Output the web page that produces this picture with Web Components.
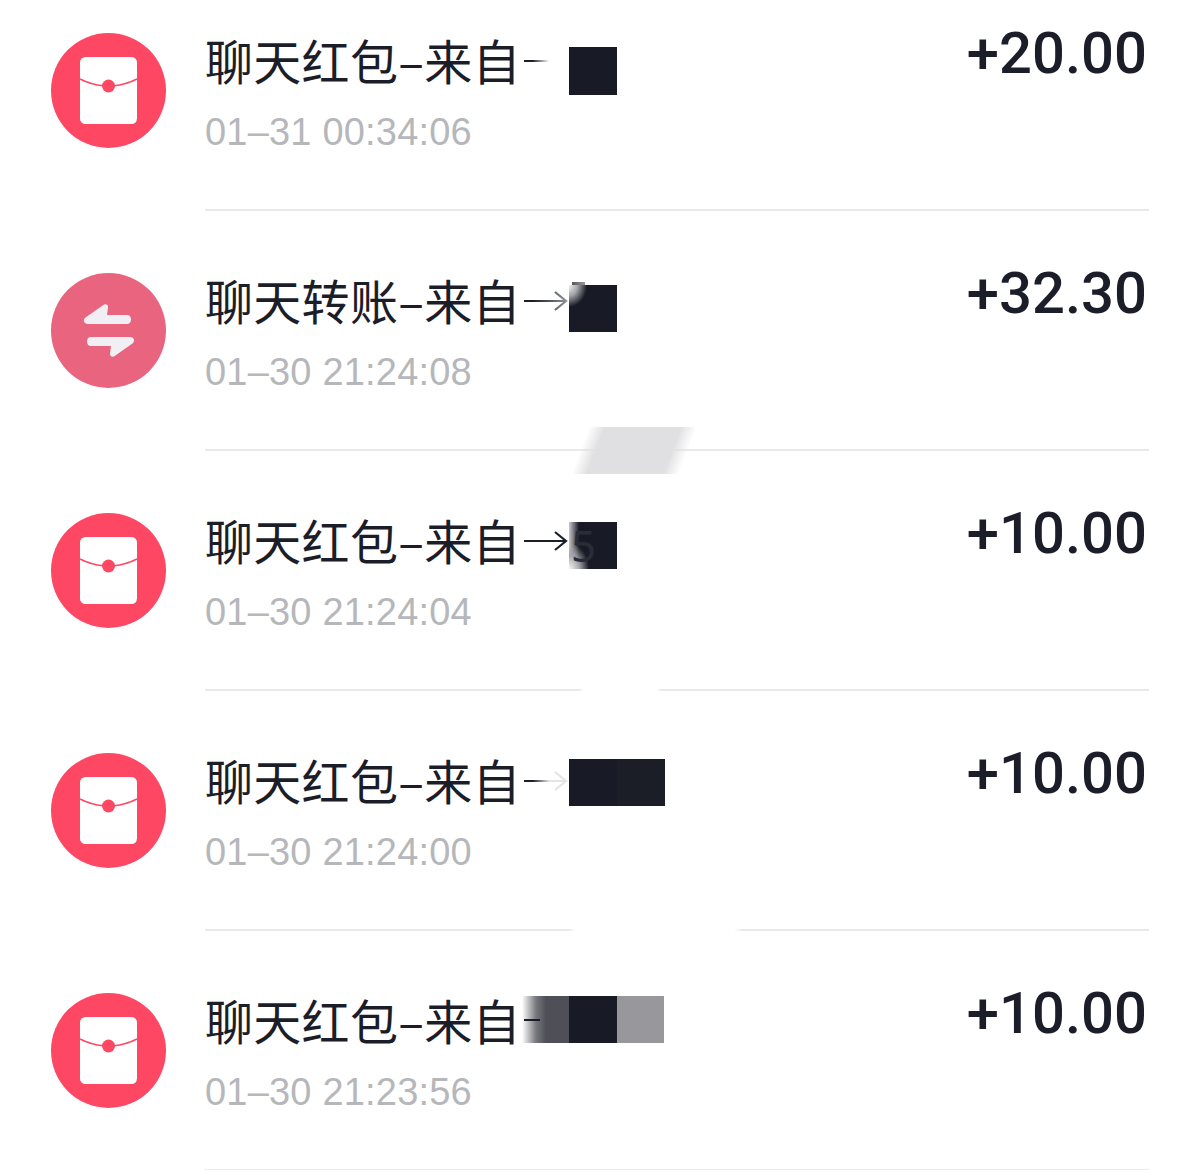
<!DOCTYPE html>
<html lang="zh">
<head>
<meta charset="utf-8">
<title>账单</title>
<style>
    html, body {
        margin: 0;
        background: #fff;
    }

    body {
        height: 1170px;
        overflow: hidden;
        position: relative;
    }
</style>
</head>
<body>

<template id="bill-list-template">
    <style>
        :host {
            display: flex;
            flex-direction: column;
            margin-top: -29px;
        }
    </style>
    <slot></slot>
</template>

<template id="bill-icon-template">
    <style>
        :host {
            display: block;
            width: 115px;
            height: 115px;
        }

        svg {
            display: block;
        }
    </style>
    <svg width="115" height="115" viewBox="0 0 115 115"></svg>
</template>

<template id="bill-row-template">
    <style>
        :host {
            display: flex;
            height: 240px;
            padding: 0 51px;
            box-sizing: border-box;
            gap: 39px;
        }

        .icon {
            padding-top: 62px;
        }

        .body {
            flex: 1;
            display: flex;
            justify-content: space-between;
            border-bottom: 2px solid #e9e9eb;
        }

        .title {
            display: flex;
            align-items: center;
            height: 60px;
            margin-top: 58px;
            font: 400 48px "Noto Sans CJK SC", sans-serif;
            letter-spacing: .3px;
            color: #1b1d29;
            white-space: nowrap;
        }

        .time {
            margin-top: 18px;
            height: 50px;
            font: 400 38px/50px "Liberation Sans", sans-serif;
            letter-spacing: .2px;
            color: #b6b7bb;
            white-space: nowrap;
        }

        .amount {
            margin-top: 42px;
            margin-right: 2px;
            font: 500 58px/80px Roboto, sans-serif;
            color: #1b1d29;
        }
    </style>
    <div class="icon"><slot name="icon"></slot></div>
    <div class="body">
        <div>
            <div class="title"><slot name="title"></slot><slot name="arrow"></slot></div>
            <div class="time"><slot name="time"></slot></div>
        </div>
        <div class="amount"><slot name="amount"></slot></div>
    </div>
</template>

<template id="bill-arrow-template">
    <style>
        :host {
            display: block;
            width: 46px;
            height: 32px;
            margin-left: 1px;
            margin-top: 4px;
        }

        svg {
            display: block;
        }
    </style>
    <svg width="46" height="32" viewBox="0 0 46 32" fill="none" stroke-width="2.2"></svg>
</template>

<template id="mosaic-cell-template">
    <style>
        :host {
            position: absolute;
            display: block;
            background: #181a25;
            font: 400 44px/47px "Noto Sans", sans-serif;
            color: #2a2c3a;
        }
    </style>
    <slot></slot>
</template>

<template id="smudge-patch-template">
    <style>
        :host {
            position: absolute;
            display: block;
        }
    </style>
</template>

<bill-list>
    <bill-row>
        <bill-icon slot="icon" kind="packet"></bill-icon>
        <span slot="title">聊天红包–来自</span>
        <bill-arrow slot="arrow" fade="line"></bill-arrow>
        <span slot="time">01–31 00:34:06</span>
        <span slot="amount">+20.00</span>
    </bill-row>
    <bill-row>
        <bill-icon slot="icon" kind="transfer"></bill-icon>
        <span slot="title">聊天转账–来自</span>
        <bill-arrow slot="arrow" fade="head"></bill-arrow>
        <span slot="time">01–30 21:24:08</span>
        <span slot="amount">+32.30</span>
    </bill-row>
    <bill-row>
        <bill-icon slot="icon" kind="packet"></bill-icon>
        <span slot="title">聊天红包–来自</span>
        <bill-arrow slot="arrow"></bill-arrow>
        <span slot="time">01–30 21:24:04</span>
        <span slot="amount">+10.00</span>
    </bill-row>
    <bill-row>
        <bill-icon slot="icon" kind="packet"></bill-icon>
        <span slot="title">聊天红包–来自</span>
        <bill-arrow slot="arrow" fade="faint"></bill-arrow>
        <span slot="time">01–30 21:24:00</span>
        <span slot="amount">+10.00</span>
    </bill-row>
    <bill-row>
        <bill-icon slot="icon" kind="packet"></bill-icon>
        <span slot="title">聊天红包–来自</span>
        <bill-arrow slot="arrow" fade="line"></bill-arrow>
        <span slot="time">01–30 21:23:56</span>
        <span slot="amount">+10.00</span>
    </bill-row>
</bill-list>

<!-- mosaic blocks and retouching lie over the list -->
<mosaic-cell style="left:569px;top:47px;width:48px;height:48px"></mosaic-cell>
<mosaic-cell style="left:569px;top:285px;width:48px;height:47px;background:radial-gradient(ellipse 18px 22px at 0 0,#f4f4f5 0,#a0a1a6 9px,#181a25 100%)"></mosaic-cell>
<mosaic-cell style="left:572px;top:282px;width:13px;height:3px;background:linear-gradient(90deg,#555,#999)"></mosaic-cell>
<mosaic-cell style="left:569px;top:522px;width:48px;height:47px;padding-left:2px;box-sizing:border-box;background:radial-gradient(ellipse 20px 26px at 0 100%,#f7f7f8 0,#a8a9ae 10px,transparent 100%),linear-gradient(90deg,#c9c9cc 0,#181a25 10px)">5</mosaic-cell>
<mosaic-cell style="left:569px;top:759px;width:48px;height:47px"></mosaic-cell>
<mosaic-cell style="left:617px;top:759px;width:48px;height:47px;background:#1c1e27"></mosaic-cell>
<mosaic-cell style="left:522px;top:996px;width:47px;height:47px;background:linear-gradient(90deg,#fff 0,#77777e 14px,#4f4f58 24px)"></mosaic-cell>
<mosaic-cell style="left:524px;top:1019px;width:16px;height:2px;background:#1b1d29"></mosaic-cell>
<mosaic-cell style="left:569px;top:996px;width:48px;height:47px"></mosaic-cell>
<mosaic-cell style="left:617px;top:996px;width:47px;height:47px;background:#98989c"></mosaic-cell>

<smudge-patch style="left:580px;top:427px;width:108px;height:47px;background:linear-gradient(90deg,transparent,#e0e0e2 16px,#e0e0e2 calc(100% - 16px),transparent);transform:skewX(-21deg)"></smudge-patch>
<smudge-patch style="left:578px;top:686px;width:84px;height:8px;background:linear-gradient(90deg,transparent,#fff 6px,#fff 78px,transparent)"></smudge-patch>
<smudge-patch style="left:568px;top:926px;width:174px;height:8px;background:linear-gradient(90deg,transparent,#fff 8px,#fff 166px,transparent)"></smudge-patch>

<script>
    function attachTemplate(el, id) {
        const root = el.attachShadow({ mode: "open" });
        root.appendChild(document.getElementById(id).content.cloneNode(true));
        return root;
    }

    const SWAP_ARROW = "M34.500 44.500L52 32.200C54.500 30.400 57.400 31.700 57 34.500L56 42H76C78.600 42 80 44 80 46.500C80 49 78.600 51 76 51H37C32.800 51 31.500 46.700 34.500 44.500Z";

    const ICONS = {
        packet: `
            <circle cx="57.500" cy="57.500" r="57.500" fill="#fe4763"/>
            <rect x="29" y="24" width="57" height="67" rx="5.500" fill="#fff"/>
            <path d="M29 46C36 49.500 43 52 52 52.800M86 46C79 49.500 72 52 63 52.800" fill="none" stroke="#fe4763" stroke-width="1.600"/>
            <circle cx="57.500" cy="53" r="6.500" fill="#fe4763"/>`,
        transfer: `
            <circle cx="57.500" cy="57.500" r="57.500" fill="#e8647f"/>
            <g fill="#f1eff3">
                <path d="${SWAP_ARROW}"/>
                <path d="${SWAP_ARROW}" transform="rotate(180 58 57.500)"/>
            </g>`
    };

    const ARROW_COLORS = {
        line: ["#1b1d29", "#ffffff", "#ffffff"],
        head: ["#1b1d29", "#50525b", "#8f9095"],
        faint: ["#1b1d29", "#e4e4e6", "#e4e4e6"]
    };

    const ARROW_PATH = "M2 16H44M33 7L44 16L33 25";

    customElements.define("bill-list", class BillList extends HTMLElement {
        constructor() {
            super();
            attachTemplate(this, "bill-list-template");
        }
    });

    customElements.define("bill-row", class BillRow extends HTMLElement {
        constructor() {
            super();
            attachTemplate(this, "bill-row-template");
        }
    });

    customElements.define("bill-icon", class BillIcon extends HTMLElement {
        connectedCallback() {
            const root = this.shadowRoot || attachTemplate(this, "bill-icon-template");
            root.querySelector("svg").innerHTML = ICONS[this.getAttribute("kind")];
        }
    });

    let arrowId = 0;
    customElements.define("bill-arrow", class BillArrow extends HTMLElement {
        connectedCallback() {
            const root = this.shadowRoot || attachTemplate(this, "bill-arrow-template");
            const fade = this.getAttribute("fade");
            const id = "fade" + arrowId++;
            const svg = root.querySelector("svg");
            if (!fade) {
                svg.innerHTML = `<path d="${ARROW_PATH}" stroke="#1b1d29"/>`;
                return;
            }
            const [start, mid, end] = ARROW_COLORS[fade];
            svg.innerHTML = `
                <defs><linearGradient id="${id}" gradientUnits="userSpaceOnUse" x1="2" y1="0" x2="44" y2="0">
                    <stop offset=".2" stop-color="${start}"/>
                    <stop offset=".6" stop-color="${mid}"/>
                    <stop offset="1" stop-color="${end}"/>
                </linearGradient></defs>
                <path d="${ARROW_PATH}" stroke="url(#${id})"/>`;
        }
    });

    customElements.define("mosaic-cell", class MosaicCell extends HTMLElement {
        constructor() {
            super();
            attachTemplate(this, "mosaic-cell-template");
        }
    });

    customElements.define("smudge-patch", class SmudgePatch extends HTMLElement {
        constructor() {
            super();
            attachTemplate(this, "smudge-patch-template");
        }
    });
</script>
</body>
</html>
